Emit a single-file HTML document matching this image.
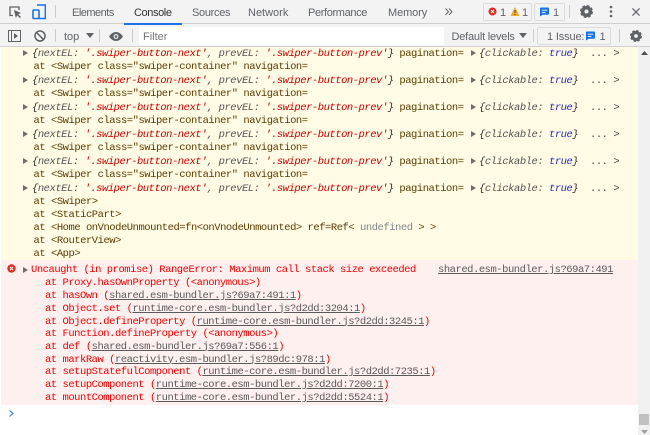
<!DOCTYPE html>
<html><head><meta charset="utf-8">
<style>
html,body{margin:0;padding:0}
body{width:650px;height:435px;overflow:hidden;background:#fff;position:relative;font-family:"Liberation Sans",sans-serif;filter:blur(.3px)}
.a{position:absolute}
.t{position:absolute;white-space:nowrap;font-size:11px;color:#5f6368;line-height:14px}
.m{position:absolute;white-space:pre;font-family:"Liberation Mono",monospace;font-size:10.5px;letter-spacing:-.47px;line-height:13px;color:#5c3c00;margin-top:1px}
.o{color:#555;font-style:italic}
.s{color:#c80000;font-style:italic}
.b{color:#303030;font-style:italic}
.v{color:#2a2ab0;font-style:italic}
.r{color:#f00000}
.r u{color:#5a5a5a;text-decoration:underline}
.g{color:#80868b}
svg{position:absolute;overflow:visible}
</style></head><body>
<div class="a" style="left:0;top:0;width:650px;height:47px;background:#f3f3f3"></div>
<div class="a" style="left:0;top:23px;width:650px;height:1px;background:#d0d0d0"></div>
<div class="a" style="left:0;top:46px;width:650px;height:1px;background:#d0d0d0"></div>
<div class="a" style="left:124px;top:23px;width:57.500px;height:2px;background:#1a73e8"></div>
<div class="a" style="left:55px;top:5px;width:1px;height:13px;background:#ccc"></div>
<div class="a" style="left:55px;top:29px;width:1px;height:13px;background:#ccc"></div>
<div class="a" style="left:99px;top:29px;width:1px;height:13px;background:#ccc"></div>
<div class="a" style="left:132px;top:29px;width:1px;height:13px;background:#ccc"></div>
<div class="a" style="left:533px;top:29px;width:1px;height:13px;background:#ccc"></div>
<div class="a" style="left:619px;top:29px;width:1px;height:13px;background:#ccc"></div>
<div class="a" style="left:569px;top:5px;width:1px;height:13px;background:#ccc"></div>

<svg style="left:9px;top:6px" width="13" height="12" viewBox="0 0 13 12"><path d="M4 9.500H1V1h9v3" fill="none" stroke="#5f6368" stroke-width="1.300"/><path d="M5 4l7 3-2.800 1.200L12 11l-1.300 1-2.400-2.800L6.800 12z" fill="#5f6368"/></svg>
<svg style="left:32px;top:4px" width="14" height="16" viewBox="0 0 14 16"><path d="M5 1h8.300v13.500H7" fill="none" stroke="#1a73e8" stroke-width="1.400"/><rect x="1" y="6" width="6" height="8.500" rx="1" fill="none" stroke="#1a73e8" stroke-width="1.600"/></svg>
<div class="t" style="left:72px;top:5.500px;letter-spacing:-.5px">Elements</div>
<div class="t" style="left:134px;top:5.500px;color:#333;letter-spacing:-.4px">Console</div>
<div class="t" style="left:192px;top:5.500px;letter-spacing:-.3px">Sources</div>
<div class="t" style="left:248px;top:5.500px">Network</div>
<div class="t" style="left:308px;top:5.500px;letter-spacing:-.36px">Performance</div>
<div class="t" style="left:388px;top:5.500px;letter-spacing:-.1px">Memory</div>
<svg style="left:445px;top:8px" width="8" height="8" viewBox="0 0 8 8"><path d="M.5 .5l3 3.200-3 3.200M4 .5l3 3.200-3 3.200" fill="none" stroke="#5f6368" stroke-width="1"/></svg>

<div class="a" style="left:483px;top:3px;width:47px;height:16px;border:1px solid #dcdcdc;border-radius:2px"></div>
<div class="a" style="left:534px;top:3px;width:29px;height:16px;border:1px solid #dcdcdc;border-radius:2px"></div>
<svg style="left:488px;top:7px" width="9" height="9" viewBox="0 0 9 9"><circle cx="4.500" cy="4.500" r="4" fill="#d93025"/><path d="M3 3l3 3M6 3L3 6" stroke="#fff" stroke-width="1"/></svg>
<div class="t" style="left:500px;top:5.500px">1</div>
<svg style="left:510px;top:7px" width="10" height="9" viewBox="0 0 10 9"><path d="M5 0l4.500 9H.5z" fill="#f2ab26"/><path d="M5 3v3M5 7v1" stroke="#444" stroke-width="1"/></svg>
<div class="t" style="left:522px;top:5.500px">1</div>
<svg style="left:540px;top:7px" width="9" height="10" viewBox="0 0 10 10"><path d="M1 0h8a1 1 0 0 1 1 1v6a1 1 0 0 1-1 1H3L0 10V1a1 1 0 0 1 1-1z" fill="#1a73e8"/><path d="M2 3h6M2 5.500h4" stroke="#fff" stroke-width="1"/></svg>
<div class="t" style="left:553px;top:5.500px">1</div>
<svg style="left:580px;top:5px" width="13" height="13" viewBox="0 0 24 24"><circle cx="12" cy="12" r="7" fill="none" stroke="#5f6368" stroke-width="6.500"/><circle cx="12" cy="12" r="10.500" fill="none" stroke="#5f6368" stroke-width="3" stroke-dasharray="5.150 3.100"/></svg>
<svg style="left:609px;top:5px" width="4" height="13" viewBox="0 0 4 13"><circle cx="2" cy="2" r="1.300" fill="#5f6368"/><circle cx="2" cy="6.500" r="1.300" fill="#5f6368"/><circle cx="2" cy="11" r="1.300" fill="#5f6368"/></svg>
<svg style="left:632px;top:7.500px" width="8" height="8" viewBox="0 0 9 9"><path d="M.5.500l8 8M8.500.5l-8 8" stroke="#5f6368" stroke-width="1.300"/></svg>

<svg style="left:8px;top:30px" width="13" height="12" viewBox="0 0 13 12"><rect x=".5" y=".5" width="12" height="11" fill="none" stroke="#5f6368"/><path d="M3.500 0v12" stroke="#5f6368"/><path d="M6 3l4 3-4 3z" fill="#5f6368"/></svg>
<svg style="left:34px;top:30px" width="12" height="12" viewBox="0 0 12 12"><circle cx="6" cy="6" r="5" fill="none" stroke="#5f6368" stroke-width="1.500"/><path d="M2.500 2.500l7 7" stroke="#5f6368" stroke-width="1.500"/></svg>
<div class="t" style="left:64px;top:29.500px">top</div>
<svg style="left:86px;top:33px" width="8" height="5" viewBox="0 0 8 5"><path d="M0 0h8L4 5z" fill="#5f6368"/></svg>
<svg style="left:109px;top:32px" width="14" height="9" viewBox="0 0 14 9"><path d="M0 4.500C2 1.500 4.500 0 7 0s5 1.500 7 4.500C12 7.500 9.500 9 7 9S2 7.500 0 4.500z" fill="#5f6368"/><circle cx="7" cy="4.500" r="2.400" fill="#f3f3f3"/><circle cx="7" cy="4.500" r="1.300" fill="#5f6368"/></svg>
<div class="a" style="left:139px;top:26.500px;width:305px;height:18px;background:#fff"></div>
<div class="t" style="left:143px;top:29.500px;color:#757575">Filter</div>
<div class="t" style="left:451.500px;top:29.500px;letter-spacing:-.2px">Default levels</div>
<svg style="left:519px;top:33px" width="8" height="5" viewBox="0 0 8 5"><path d="M0 0h8L4 5z" fill="#5f6368"/></svg>
<div class="a" style="left:537px;top:27px;width:72px;height:16px;border:1px solid #dcdcdc;border-radius:2px"></div>
<div class="t" style="left:547px;top:29.500px;letter-spacing:-.15px">1 Issue:</div>
<svg style="left:586px;top:30.500px" width="9" height="10" viewBox="0 0 10 10"><path d="M1 0h8a1 1 0 0 1 1 1v6a1 1 0 0 1-1 1H3L0 10V1a1 1 0 0 1 1-1z" fill="#1a73e8"/><path d="M2 3h6M2 5.500h4" stroke="#fff" stroke-width="1"/></svg>
<div class="t" style="left:599.500px;top:29.500px">1</div>
<svg style="left:630px;top:30px" width="12" height="12" viewBox="0 0 24 24"><circle cx="12" cy="12" r="7" fill="none" stroke="#5f6368" stroke-width="6.500"/><circle cx="12" cy="12" r="10.500" fill="none" stroke="#5f6368" stroke-width="3" stroke-dasharray="5.150 3.100"/></svg>

<div class="a" style="left:1px;top:47px;width:637px;height:213px;background:#fffbe5"></div>
<div class="a" style="left:1px;top:260px;width:637px;height:145px;background:#fff0f0"></div>
<div class="a" style="left:638px;top:47px;width:12px;height:388px;background:#f1f1f1"></div>
<div class="a" style="left:639px;top:414px;width:10px;height:11px;background:#c1c1c1"></div>
<svg style="left:641px;top:51px" width="7" height="4" viewBox="0 0 7 4"><path d="M3.500 0L7 4H0z" fill="#505050"/></svg>
<svg style="left:641px;top:430px" width="7" height="4" viewBox="0 0 7 4"><path d="M0 0h7L3.500 4z" fill="#a0a0a0"/></svg>

<svg style="left:23px;top:50px" width="5" height="6" viewBox="0 0 5 6"><path d="M0 0l5 3-5 3z" fill="#6e6e6e"/></svg>
<svg style="left:471px;top:50px" width="5" height="6" viewBox="0 0 5 6"><path d="M0 0l5 3-5 3z" fill="#6e6e6e"/></svg>
<div class="m" style="left:32px;top:46.500px"><span class="b">{</span><span class="o">nextEL: </span><span class="s">'.swiper-button-next'</span><span class="o">, prevEL: </span><span class="s">'.swiper-button-prev'</span><span class="b">}</span> pagination=</div>
<div class="m" style="left:479px;top:46.500px"><span class="b">{</span><span class="o">clickable: </span><span class="v">true</span><span class="b">}</span></div>
<div class="m" style="left:590px;top:47px;color:#444">... &gt;</div>
<div class="m" style="left:33.500px;top:60px">at &lt;Swiper class="swiper-container" navigation=</div>

<svg style="left:23px;top:77px" width="5" height="6" viewBox="0 0 5 6"><path d="M0 0l5 3-5 3z" fill="#6e6e6e"/></svg>
<svg style="left:471px;top:77px" width="5" height="6" viewBox="0 0 5 6"><path d="M0 0l5 3-5 3z" fill="#6e6e6e"/></svg>
<div class="m" style="left:32px;top:73.500px"><span class="b">{</span><span class="o">nextEL: </span><span class="s">'.swiper-button-next'</span><span class="o">, prevEL: </span><span class="s">'.swiper-button-prev'</span><span class="b">}</span> pagination=</div>
<div class="m" style="left:479px;top:73.500px"><span class="b">{</span><span class="o">clickable: </span><span class="v">true</span><span class="b">}</span></div>
<div class="m" style="left:590px;top:74px;color:#444">... &gt;</div>
<div class="m" style="left:33.500px;top:87px">at &lt;Swiper class="swiper-container" navigation=</div>

<svg style="left:23px;top:104px" width="5" height="6" viewBox="0 0 5 6"><path d="M0 0l5 3-5 3z" fill="#6e6e6e"/></svg>
<svg style="left:471px;top:104px" width="5" height="6" viewBox="0 0 5 6"><path d="M0 0l5 3-5 3z" fill="#6e6e6e"/></svg>
<div class="m" style="left:32px;top:100.500px"><span class="b">{</span><span class="o">nextEL: </span><span class="s">'.swiper-button-next'</span><span class="o">, prevEL: </span><span class="s">'.swiper-button-prev'</span><span class="b">}</span> pagination=</div>
<div class="m" style="left:479px;top:100.500px"><span class="b">{</span><span class="o">clickable: </span><span class="v">true</span><span class="b">}</span></div>
<div class="m" style="left:590px;top:101px;color:#444">... &gt;</div>
<div class="m" style="left:33.500px;top:114px">at &lt;Swiper class="swiper-container" navigation=</div>

<svg style="left:23px;top:131px" width="5" height="6" viewBox="0 0 5 6"><path d="M0 0l5 3-5 3z" fill="#6e6e6e"/></svg>
<svg style="left:471px;top:131px" width="5" height="6" viewBox="0 0 5 6"><path d="M0 0l5 3-5 3z" fill="#6e6e6e"/></svg>
<div class="m" style="left:32px;top:127.500px"><span class="b">{</span><span class="o">nextEL: </span><span class="s">'.swiper-button-next'</span><span class="o">, prevEL: </span><span class="s">'.swiper-button-prev'</span><span class="b">}</span> pagination=</div>
<div class="m" style="left:479px;top:127.500px"><span class="b">{</span><span class="o">clickable: </span><span class="v">true</span><span class="b">}</span></div>
<div class="m" style="left:590px;top:128px;color:#444">... &gt;</div>
<div class="m" style="left:33.500px;top:141px">at &lt;Swiper class="swiper-container" navigation=</div>

<svg style="left:23px;top:158px" width="5" height="6" viewBox="0 0 5 6"><path d="M0 0l5 3-5 3z" fill="#6e6e6e"/></svg>
<svg style="left:471px;top:158px" width="5" height="6" viewBox="0 0 5 6"><path d="M0 0l5 3-5 3z" fill="#6e6e6e"/></svg>
<div class="m" style="left:32px;top:154.500px"><span class="b">{</span><span class="o">nextEL: </span><span class="s">'.swiper-button-next'</span><span class="o">, prevEL: </span><span class="s">'.swiper-button-prev'</span><span class="b">}</span> pagination=</div>
<div class="m" style="left:479px;top:154.500px"><span class="b">{</span><span class="o">clickable: </span><span class="v">true</span><span class="b">}</span></div>
<div class="m" style="left:590px;top:155px;color:#444">... &gt;</div>
<div class="m" style="left:33.500px;top:168px">at &lt;Swiper class="swiper-container" navigation=</div>

<svg style="left:23px;top:185px" width="5" height="6" viewBox="0 0 5 6"><path d="M0 0l5 3-5 3z" fill="#6e6e6e"/></svg>
<svg style="left:471px;top:185px" width="5" height="6" viewBox="0 0 5 6"><path d="M0 0l5 3-5 3z" fill="#6e6e6e"/></svg>
<div class="m" style="left:32px;top:181.500px"><span class="b">{</span><span class="o">nextEL: </span><span class="s">'.swiper-button-next'</span><span class="o">, prevEL: </span><span class="s">'.swiper-button-prev'</span><span class="b">}</span> pagination=</div>
<div class="m" style="left:479px;top:181.500px"><span class="b">{</span><span class="o">clickable: </span><span class="v">true</span><span class="b">}</span></div>
<div class="m" style="left:590px;top:182px;color:#444">... &gt;</div>

<div class="m" style="left:33.500px;top:195px">at &lt;Swiper&gt;</div>
<div class="m" style="left:33.500px;top:208px">at &lt;StaticPart&gt;</div>
<div class="m" style="left:33.500px;top:221px">at &lt;Home onVnodeUnmounted=fn&lt;onVnodeUnmounted&gt; ref=Ref&lt; <span class="g">undefined</span> &gt; &gt;</div>
<div class="m" style="left:33.500px;top:234px">at &lt;RouterView&gt;</div>
<div class="m" style="left:33.500px;top:247px">at &lt;App&gt;</div>

<svg style="left:6.500px;top:264px" width="9" height="9" viewBox="0 0 9 9"><circle cx="4.500" cy="4.500" r="4.200" fill="#d93025"/><path d="M3 3l3 3M6 3L3 6" stroke="#fff" stroke-width="1"/></svg>
<svg style="left:23px;top:267px" width="5" height="6" viewBox="0 0 5 6"><path d="M0 0l5 3-5 3z" fill="#6e6e6e"/></svg>
<div class="m r" style="left:31px;top:263px">Uncaught (in promise) RangeError: Maximum call stack size exceeded</div>
<div class="m r" style="left:438px;top:263px"><u>shared.esm-bundler.js?69a7:491</u></div>
<div class="m r" style="left:45px;top:276px">at Proxy.hasOwnProperty (&lt;anonymous&gt;)</div>
<div class="m r" style="left:45px;top:289px">at hasOwn (<u>shared.esm-bundler.js?69a7:491:1</u>)</div>
<div class="m r" style="left:45px;top:301.500px">at Object.set (<u>runtime-core.esm-bundler.js?d2dd:3204:1</u>)</div>
<div class="m r" style="left:45px;top:314.500px">at Object.defineProperty (<u>runtime-core.esm-bundler.js?d2dd:3245:1</u>)</div>
<div class="m r" style="left:45px;top:327px">at Function.defineProperty (&lt;anonymous&gt;)</div>
<div class="m r" style="left:45px;top:339.500px">at def (<u>shared.esm-bundler.js?69a7:556:1</u>)</div>
<div class="m r" style="left:45px;top:352.500px">at markRaw (<u>reactivity.esm-bundler.js?89dc:978:1</u>)</div>
<div class="m r" style="left:45px;top:365px">at setupStatefulComponent (<u>runtime-core.esm-bundler.js?d2dd:7235:1</u>)</div>
<div class="m r" style="left:45px;top:378px">at setupComponent (<u>runtime-core.esm-bundler.js?d2dd:7200:1</u>)</div>
<div class="m r" style="left:45px;top:391px">at mountComponent (<u>runtime-core.esm-bundler.js?d2dd:5524:1</u>)</div>

<svg style="left:9px;top:410px" width="5" height="7" viewBox="0 0 5 7"><path d="M.5.500l3.500 3-3.500 3" fill="none" stroke="#4a90e8" stroke-width="1.200"/></svg>
</body></html>
